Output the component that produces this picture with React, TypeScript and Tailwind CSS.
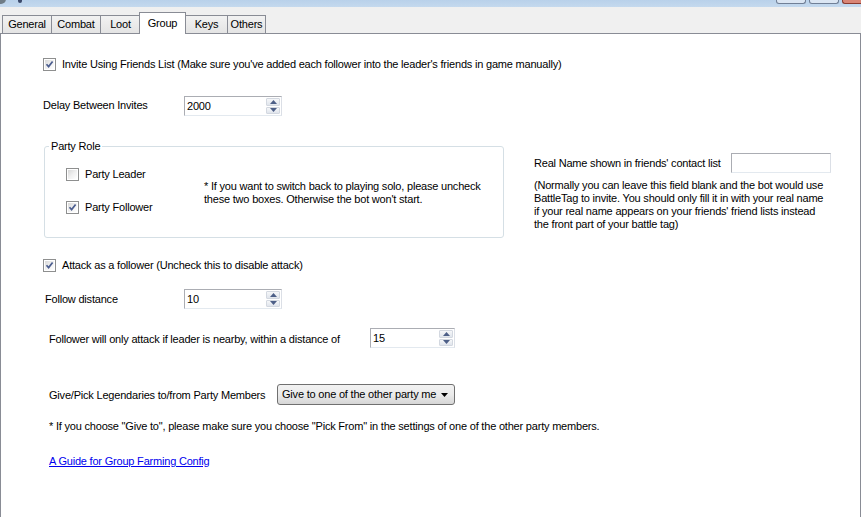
import React from "react";

const font = { fontFamily: '"Liberation Sans", Arial, sans-serif' };

function CheckBox({ checked }: { checked?: boolean }) {
  return (
    <span className="relative inline-block w-[13px] h-[13px] border border-[#8e8f8f] bg-white shrink-0">
      <span className="absolute inset-[1px] bg-gradient-to-br from-[#d8d8d8] via-[#f0f0f0] to-white" />
      {checked && (
        <svg className="absolute inset-0" width="11" height="11" viewBox="0 0 11 11">
          <path d="M2.5 5.2 L4.6 7.6 L8.6 2.4" fill="none" stroke="#4b5d8f" strokeWidth="1.7" />
        </svg>
      )}
    </span>
  );
}

function Spinner({ value, width }: { value: string; width: number }) {
  return (
    <div
      className="flex h-[20px] border border-[#abadb3] border-b-[#e3e9ef] border-r-[#dbdfe6] bg-white"
      style={{ width }}
    >
      <div className="flex-1 pl-[2px] leading-[18px] text-[11px] text-black">{value}</div>
      <div className="flex flex-col w-[15px] py-[1px] pr-[1px] gap-[1px]">
        <div className="flex-1 flex items-center justify-center border border-[#d3d8e0] rounded-[1px] bg-gradient-to-b from-[#f6f7f9] to-[#e0e5ec]">
          <svg width="7" height="4" viewBox="0 0 7 4">
            <path d="M0 4 L3.5 0 L7 4 Z" fill="#4d5f87" />
          </svg>
        </div>
        <div className="flex-1 flex items-center justify-center border border-[#d3d8e0] rounded-[1px] bg-gradient-to-b from-[#f6f7f9] to-[#e0e5ec]">
          <svg width="7" height="4" viewBox="0 0 7 4">
            <path d="M0 0 L3.5 4 L7 0 Z" fill="#4d5f87" />
          </svg>
        </div>
      </div>
    </div>
  );
}

const tabs = ["General", "Combat", "Loot", "Group", "Keys", "Others"];
const tabWidths = [49, 49, 40, 45, 42, 39];

export default function App() {
  return (
    <div
      className="w-[861px] h-[517px] overflow-hidden bg-[#f0f0f0] text-[11px] tracking-[-0.2px] text-black flex flex-col"
      style={font}
    >
      {/* title bar remnant */}
      <div className="relative h-[7px] bg-gradient-to-b from-[#b9d1ea] to-[#c4d9ee] flex items-end">
        <span className="absolute left-[-4px] top-[-6px] w-[10px] h-[10px] rounded-full bg-[#6f7c86]" />
        <span className="absolute left-[18px] top-[0px] w-[4px] h-[3px] rounded-b-full bg-[#3b4a6b]" />
        <div className="ml-auto flex gap-[3px] h-[4px] self-start">
          <span className="w-[30px] h-[4px] border border-t-0 border-[#707f96] rounded-b-[3px] bg-[#dbe6f3]" />
          <span className="w-[30px] h-[4px] border border-t-0 border-[#707f96] rounded-b-[3px] bg-[#dbe6f3]" />
          <span className="w-[19px] h-[4px] border border-t-0 border-r-0 border-[#8a3a2f] rounded-bl-[3px] bg-[#d98576]" />
        </div>
      </div>

      {/* tabs */}
      <div className="flex items-end h-[26px] pl-[2px] relative z-10">
        {tabs.map((t, i) =>
          t === "Group" ? (
            <div
              key={t}
              className="h-[22px] mb-[-1px] -mx-[1px] bg-white border border-b-0 border-[#898c95] flex items-start justify-center pt-[2px]"
              style={{ width: tabWidths[i] + 2 }}
            >
              {t}
            </div>
          ) : (
            <div
              key={t}
              className="h-[18px] border border-b-0 border-r-0 last:border-r border-[#898c95] bg-gradient-to-b from-[#f2f2f2] to-[#e4e4e4] flex items-center justify-center"
              style={{ width: tabWidths[i] }}
            >
              {t}
            </div>
          )
        )}
      </div>

      {/* panel */}
      <div className="flex-1 bg-white border border-b-0 border-[#898c95] flex flex-col pl-[42px]">
        <div className="mt-[23px] h-[15px] flex items-center gap-[6px]">
          <CheckBox checked />
          <span>Invite Using Friends List (Make sure you've added each follower into the leader's friends in game manually)</span>
        </div>

        <div className="mt-[24px] h-[20px] flex items-start">
          <span className="w-[141px] mt-[1px]">Delay Between Invites</span>
          <Spinner value="2000" width={98} />
        </div>

        <div className="mt-[24px] flex items-start">
          <fieldset className="w-[460px] h-[98px] ml-[1px] border border-[#d5dfe5] rounded-[3px] px-[21px] pt-[14px]">
            <legend className="ml-[-17px] px-[2px] leading-[13px]">Party Role</legend>
            <div className="flex">
              <div className="flex flex-col gap-[18px] w-[138px]">
                <div className="flex items-center gap-[6px] h-[15px]">
                  <CheckBox />
                  <span>Party Leader</span>
                </div>
                <div className="flex items-center gap-[6px] h-[15px]">
                  <CheckBox checked />
                  <span>Party Follower</span>
                </div>
              </div>
              <p className="mt-[13px] leading-[13px]">
                * If you want to switch back to playing solo, please uncheck
                <br />
                these two boxes. Otherwise the bot won't start.
              </p>
            </div>
          </fieldset>

          <div className="ml-[30px] mt-[13px] flex flex-col">
            <div className="flex items-center h-[20px]">
              <span className="w-[197px]">Real Name shown in friends' contact list</span>
              <div className="w-[100px] h-[20px] border border-[#abadb3] border-b-[#e3e9ef] border-r-[#dbdfe6] bg-white" />
            </div>
            <p className="mt-[6px] leading-[13px]">
              (Normally you can leave this field blank and the bot would use
              <br />
              BattleTag to invite. You should only fill it in with your real name
              <br />
              if your real name appears on your friends' friend lists instead
              <br />
              the front part of your battle tag)
            </p>
          </div>
        </div>

        <div className="mt-[20px] h-[15px] flex items-center gap-[6px]">
          <CheckBox checked />
          <span>Attack as a follower (Uncheck this to disable attack)</span>
        </div>

        <div className="mt-[16px] h-[20px] flex items-start pl-[2px]">
          <span className="w-[139px] mt-[2px]">Follow distance</span>
          <Spinner value="10" width={98} />
        </div>

        <div className="mt-[19px] h-[20px] flex items-start pl-[6px]">
          <span className="w-[321px] mt-[3px]">Follower will only attack if leader is nearby, within a distance of</span>
          <Spinner value="15" width={85} />
        </div>

        <div className="mt-[36px] h-[21px] flex items-start pl-[6px]">
          <span className="w-[228px] mt-[3px]">Give/Pick Legendaries to/from Party Members</span>
          <div className="w-[178px] h-[21px] rounded-[3px] border border-[#707070] bg-gradient-to-b from-[#f2f2f2] via-[#ebebeb] to-[#d6d6d6] flex items-center pl-[4px] pr-[6px]">
            <span className="flex-1 overflow-hidden whitespace-nowrap">Give to one of the other party me</span>
            <svg width="7" height="4" viewBox="0 0 7 4" className="ml-[4px]">
              <path d="M0 0 L3.5 4 L7 0 Z" fill="#000" />
            </svg>
          </div>
        </div>

        <p className="mt-[15px] pl-[6px] leading-[13px]">
          * If you choose "Give to", please make sure you choose "Pick From" in the settings of one of the other party members.
        </p>

        <a href="#" className="mt-[22px] ml-[6px] leading-[13px] text-[#0000ee] underline self-start">
          A Guide for Group Farming Config
        </a>
      </div>
    </div>
  );
}
